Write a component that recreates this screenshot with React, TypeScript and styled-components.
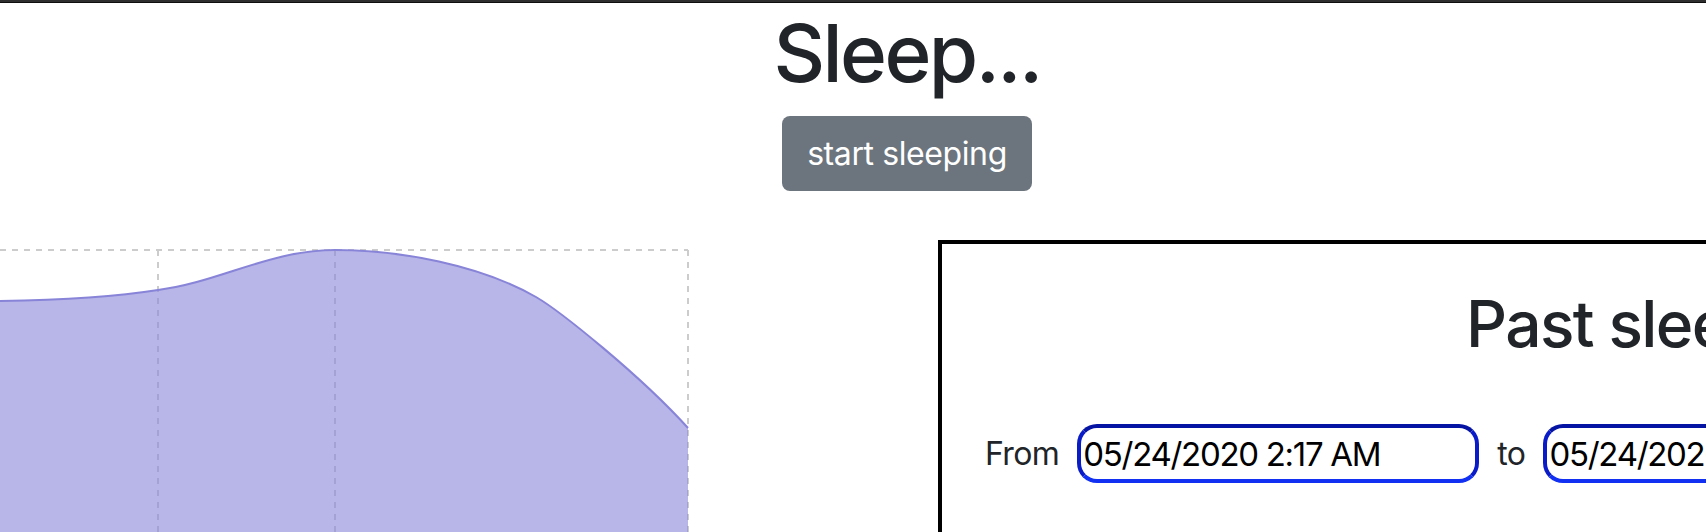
import React from "react";
import styled, { createGlobalStyle } from "styled-components";

const GlobalStyle = createGlobalStyle`
  html, body {
    margin: 0;
    padding: 0;
    background: #ffffff;
    overflow: hidden;
  }
  body {
    font-family: Inter, "Noto Sans", "Liberation Sans", sans-serif;
    color: #212529;
  }
`;

const TopBar = styled.div`
  height: 2px;
  background: #2e2e2e;
  border-bottom: 1px solid #0e0e0e;
`;

const Page = styled.div`
  width: 1814px;
`;

const Title = styled.h1`
  margin: 2px 0 15px;
  font-size: 80px;
  font-weight: 500;
  line-height: 96px;
  text-align: center;
  letter-spacing: -2.6px;
`;

const ButtonRow = styled.div`
  display: flex;
  justify-content: center;
`;

const SleepButton = styled.button`
  height: 75px;
  padding: 0 25px;
  border: none;
  border-radius: 8px;
  background: #6c757d;
  color: #ffffff;
  font-family: inherit;
  font-size: 32px;
  line-height: 48px;
  letter-spacing: -0.4px;
  cursor: pointer;
`;

const LowerRow = styled.div`
  display: flex;
  align-items: flex-start;
  margin-top: 49px;
`;

const ChartBox = styled.div`
  width: 700px;
  height: 292px;
  flex-shrink: 0;
`;

const Panel = styled.div`
  margin-left: 238px;
  width: 1100px;
  height: 420px;
  border: 4px solid #000000;
  flex-shrink: 0;
`;

const PanelTitle = styled.h2`
  margin: 41px 0 0;
  padding-left: 524px;
  font-size: 64px;
  font-weight: 500;
  line-height: 77px;
  letter-spacing: -1.6px;
  white-space: nowrap;
`;

const RangeForm = styled.div`
  display: flex;
  align-items: center;
  gap: 18px;
  margin-top: 62px;
  padding-left: 43px;
`;

const RangeLabel = styled.span`
  font-size: 32px;
  letter-spacing: -0.6px;
  color: #212529;
`;

const DateInput = styled.input`
  box-sizing: border-box;
  width: 402px;
  height: 59px;
  padding: 0 2px;
  border: 4px solid #0a1cc8;
  border-top-color: #0614a4;
  border-bottom-color: #1230f2;
  border-radius: 20px;
  background: #ffffff;
  color: #000000;
  font-family: inherit;
  font-size: 33px;
  letter-spacing: -1.3px;
  outline: none;
`;

const grid = "#cccccc";

const SleepChart: React.FC = () => {
  const top = 10;
  const area =
    "M0,61 C60,60 120,56 158,50 C220,42 270,10 335,10 C400,10 480,25 536,57 C560,71 640,135 688,188";
  return (
    <svg width="700" height="292" viewBox="0 0 700 292">
      <g stroke={grid} strokeWidth="2" strokeDasharray="6 6" fill="none">
        <line x1="0" y1={top} x2="688" y2={top} />
        <line x1="158" y1={top} x2="158" y2="292" />
        <line x1="335" y1={top} x2="335" y2="292" />
        <line x1="688" y1={top} x2="688" y2="292" />
      </g>
      <path d={`${area} L688,300 L0,300 Z`} fill="#8884d8" fillOpacity="0.6" />
      <path d={area} fill="none" stroke="#8884d8" strokeWidth="2" />
    </svg>
  );
};

const App: React.FC = () => {
  return (
    <>
      <GlobalStyle />
      <TopBar />
      <Page>
        <Title>Sleep...</Title>
        <ButtonRow>
          <SleepButton>start sleeping</SleepButton>
        </ButtonRow>
        <LowerRow>
          <ChartBox>
            <SleepChart />
          </ChartBox>
          <Panel>
            <PanelTitle>Past sleeps</PanelTitle>
            <RangeForm>
              <RangeLabel>From</RangeLabel>
              <DateInput readOnly value="05/24/2020 2:17 AM" />
              <RangeLabel>to</RangeLabel>
              <DateInput readOnly value="05/24/2020 9:41 AM" />
            </RangeForm>
          </Panel>
        </LowerRow>
      </Page>
    </>
  );
};

export default App;
